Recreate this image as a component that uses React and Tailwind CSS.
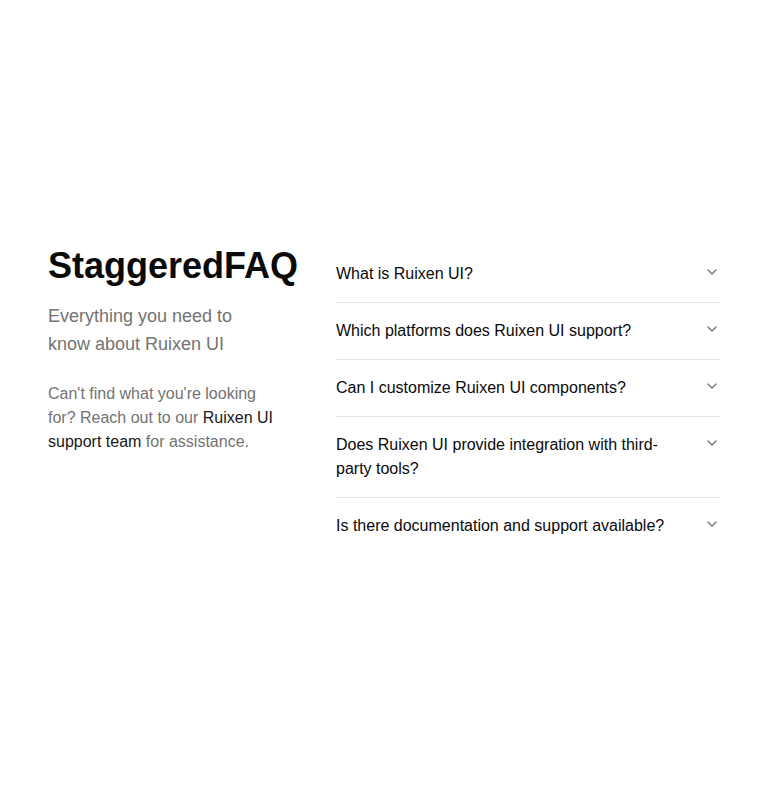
import React from "react";
import { ChevronDown } from "lucide-react";

const faqs = [
  "What is Ruixen UI?",
  "Which platforms does Ruixen UI support?",
  "Can I customize Ruixen UI components?",
  "Does Ruixen UI provide integration with third-party tools?",
  "Is there documentation and support available?",
];

export default function App() {
  return (
    <div
      className="min-h-screen w-full bg-white flex items-center px-12"
      style={{ fontFamily: '"Liberation Sans", Arial, sans-serif' }}
    >
      <div className="w-full flex items-start gap-[60px]">
        <div className="w-[228px] shrink-0">
          <h2 className="text-4xl font-bold text-neutral-950 whitespace-nowrap">StaggeredFAQ</h2>
          <p className="mt-4 text-lg text-neutral-500">
            Everything you need to know about Ruixen UI
          </p>
          <p className="mt-6 text-base text-neutral-500">
            Can't find what you're looking for? Reach out to our{" "}
            <span className="text-neutral-900">Ruixen UI support team</span> for assistance.
          </p>
        </div>
        <div className="flex-1">
          {faqs.map((q, i) => (
            <div
              key={q}
              className={i < faqs.length - 1 ? "border-b border-neutral-200" : ""}
            >
              <button className="w-full flex items-start justify-between gap-4 py-4 text-left text-base text-neutral-950">
                <span>{q}</span>
                <ChevronDown className="mt-0.5 size-4 shrink-0 text-neutral-500" strokeWidth={2} />
              </button>
            </div>
          ))}
        </div>
      </div>
    </div>
  );
}
